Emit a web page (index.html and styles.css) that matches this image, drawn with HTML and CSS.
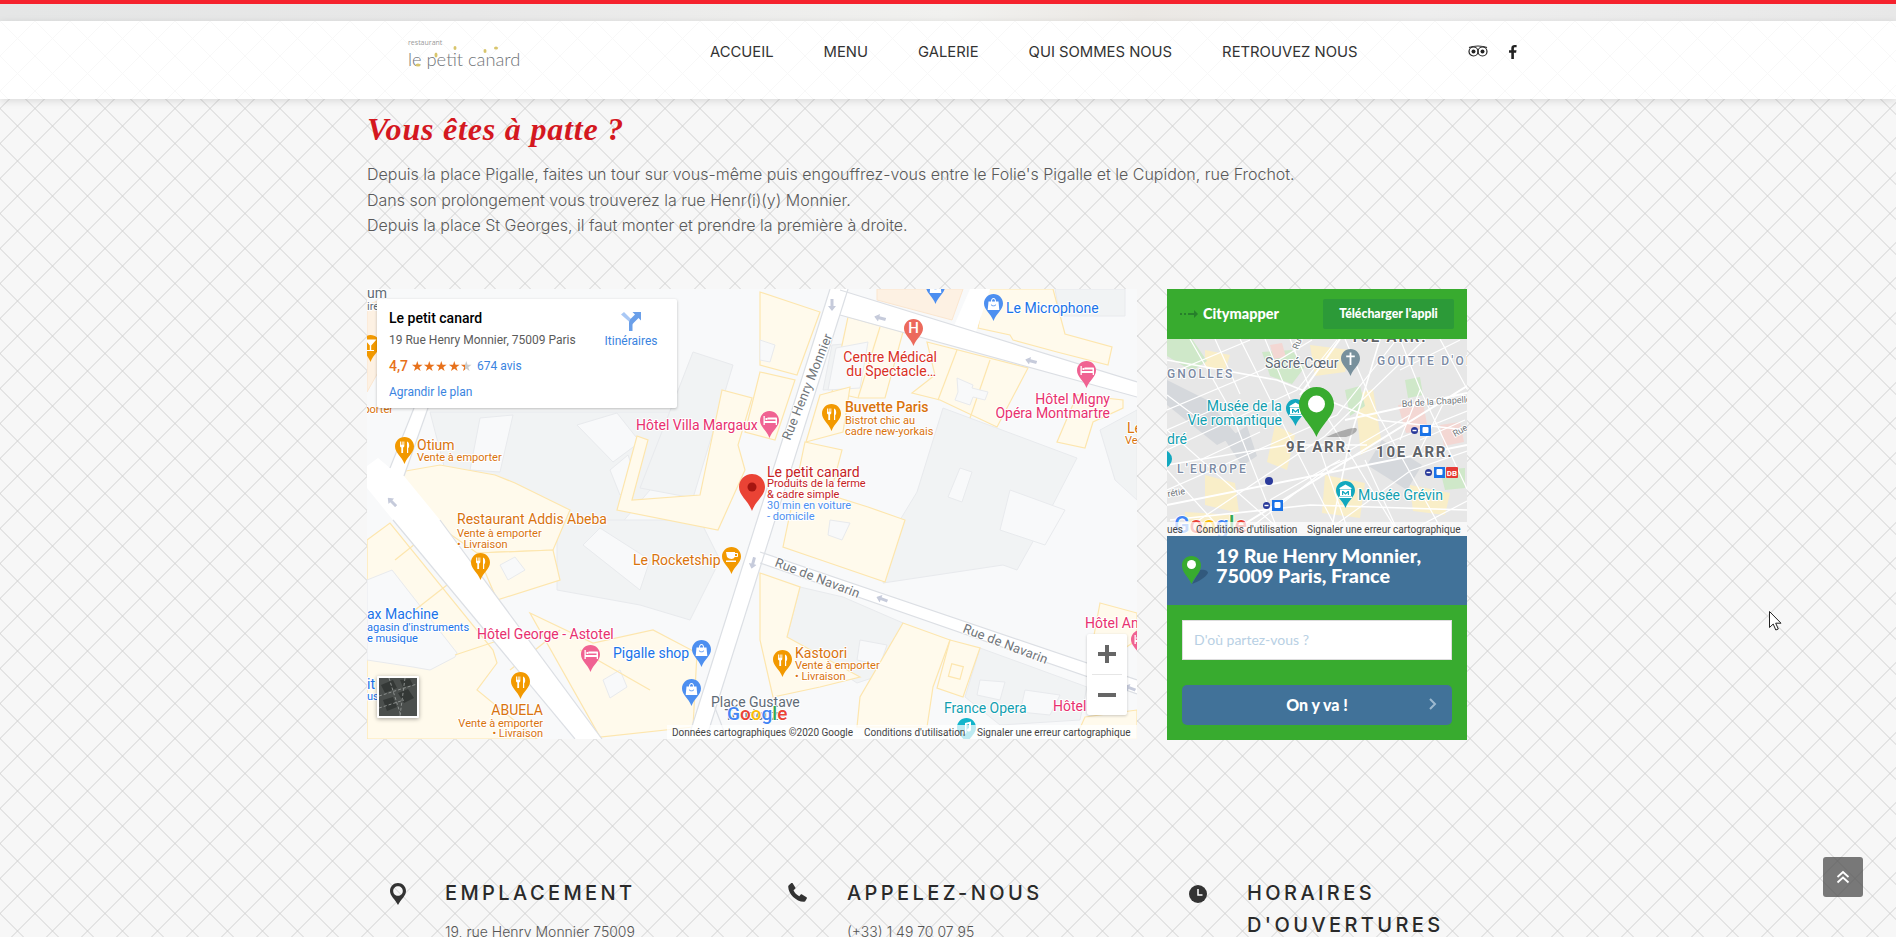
FILE: index.html
```html
<!DOCTYPE html>
<html lang="fr">
<head>
    <meta charset="UTF-8">
    <title>Le petit canard - Nous trouver</title>
    <link rel="stylesheet" href="styles.css">
</head>
<body>
<svg class="defs" width="0" height="0">
    <symbol id="pin" viewBox="0 0 19 27" overflow="visible">
        <path d="M9.5 0C4.2 0 0 4.2 0 9.5 0 16 6.6 19 9.5 27 12.4 19 19 16 19 9.5 19 4.2 14.8 0 9.5 0z"/>
    </symbol>
    <symbol id="i-food" viewBox="0 0 19 27">
        <path class="wh" d="M5 4.5h.9v3.2h.8V4.500h.9v3.200h.8V4.500h.9v4.500c0 .8-.6 1.300-1.200 1.500V16H6.300v-5.500C5.600 10.300 5 9.800 5 9zM12 4.500c1.300.3 2.200 2 2.200 4 0 1.300-.4 2.300-1 2.800V16H12z"/>
    </symbol>
    <symbol id="i-bed" viewBox="0 0 19 27">
        <path class="wh" d="M3.500 5h1.300v5h10.700V8.500h-8V6.500h8.500c.7 0 1 .5 1 1V14h-1.300v-2H4.800v2H3.500zM5.500 7h1.800v2H5.500z"/>
    </symbol>
    <symbol id="i-bag" viewBox="0 0 19 27">
        <path class="wh" d="M4.500 7.500h10l.8 8.500H3.700zM7 7.500C7 5.500 8 4 9.500 4S12 5.500 12 7.500h-1C11 6 10.500 5 9.500 5S8 6 8 7.500z"/>
        <path class="ic-bl" d="M6.800 10.500c.5 2.400 4.900 2.400 5.400 0l-.8-.1c-.4 1.500-3.400 1.500-3.800 0z"/>
    </symbol>
    <symbol id="i-cup" viewBox="0 0 19 27">
        <path class="wh" d="M4 5h9v1h2c.6 0 1 .4 1 1v2c0 .6-.4 1-1 1h-2.300c-.5 1.300-1.700 2-3.200 2S6 11.300 5 10zM13 7v2h2V7zM4 13.500h10V15H4z"/>
    </symbol>
    <symbol id="i-martini" viewBox="0 0 19 27">
        <path class="wh" d="M3.500 4.500h12l-5.300 6v4.500h2.800v1H6v-1h2.800v-4.500z"/>
    </symbol>
    <symbol id="i-museum" viewBox="0 0 19 27">
        <path class="wh" d="M9.500 3.500l6 3.500v1h-12V7zM4 8.500h11V15H4zM3 15.500h13V17H3z"/>
        <path class="ic-tl" d="M6 10h1.300l2.200 2 2.200-2H13v4h-1.200v-2.300l-2.300 2-2.300-2V14H6z"/>
    </symbol>
    <symbol id="i-cross" viewBox="0 0 19 27">
        <path class="wh" d="M8.600 3.500h1.800v3h3.400v1.800h-3.400V16H8.600V8.300H5.200V6.500h3.400z"/>
    </symbol>
    <symbol id="i-note" viewBox="0 0 19 27">
        <path class="wh" d="M8 5l6-1.500v8c0 1.200-1 2-2 2s-2-.6-2-1.600 1-1.700 2-1.700V6l-2.500.7V14c0 1.200-1 2-2 2s-2-.6-2-1.600 1-1.700 2.500-1.700z"/>
    </symbol>
    <symbol id="road-arrow" viewBox="0 0 12 8">
        <path d="M0 4l5-4v2.500h7v3H5V8z"/>
    </symbol>
    <symbol id="metro" viewBox="0 0 20 11">
        <circle class="ic-navy" cx="3.500" cy="5.500" r="3.500"/>
        <rect class="ic-wh" x="1.500" y="4.800" width="4" height="1.400"/>
        <rect class="ic-sq" x="9" y="0" width="11" height="11"/>
        <rect class="ic-wh" x="11.500" y="2" width="6" height="6" rx="1"/>
    </symbol>
</svg>

<header class="site-header">
    <div class="top-bar"></div>
    <div class="top-strip"></div>
    <div class="nav-row">
        <div class="wrap nav-inner">
            <a class="logo">
                <span class="logo-small">restaurant</span>
                <span class="logo-name">le petit canard</span>
                <svg class="logo-dabs" width="100" height="30" viewBox="0 0 100 30">
                    <ellipse class="dab" cx="10" cy="25" rx="2.500" ry="1.500"/>
                    <ellipse class="dab" cx="47" cy="8" rx="1.500" ry="2"/>
                    <ellipse class="dab" cx="28" cy="15" rx="1.500" ry="2.500"/>
                    <ellipse class="dab" cx="77" cy="11" rx="1.500" ry="2"/>
                    <ellipse class="dab" cx="88" cy="8" rx="2" ry="1.500"/>
                </svg>
            </a>
            <nav class="main-nav">
                <a>ACCUEIL</a>
                <a>MENU</a>
                <a>GALERIE</a>
                <a>QUI SOMMES NOUS</a>
                <a>RETROUVEZ NOUS</a>
            </nav>
            <div class="social">
                <svg width="20" height="12" viewBox="0 0 20 12">
                    <circle class="ta-line" cx="5.500" cy="6.500" r="4.500"/>
                    <circle class="ta-line" cx="14.500" cy="6.500" r="4.500"/>
                    <circle class="ta-dot" cx="5.500" cy="6.500" r="2"/>
                    <circle class="ta-dot" cx="14.500" cy="6.500" r="2"/>
                    <path class="ta-line" d="M1 2.500C6 .5 14 .5 19 2.500"/>
                </svg>
                <svg width="8" height="14" viewBox="0 0 8 14">
                    <path class="fb" d="M2.300 14V7.700H0V5.200h2.300V3.300C2.300 1 3.700 0 5.600 0c.9 0 1.700.1 2 .1v2.200H6.200c-1 0-1.300.5-1.300 1.200v1.700h2.600l-.4 2.500H4.900V14z"/>
                </svg>
            </div>
        </div>
    </div>
</header>

<main class="wrap">
    <h1 class="page-title">Vous êtes à patte ?</h1>
    <p class="intro">
        Depuis la place Pigalle, faites un tour sur vous-même puis engouffrez-vous entre le Folie's Pigalle et le Cupidon, rue Frochot.<br>
        Dans son prolongement vous trouverez la rue Henr(i)(y) Monnier.<br>
        Depuis la place St Georges, il faut monter et prendre la première à droite.
    </p>

    <section class="maps">
        <div class="gmap">
            <svg class="gmap-svg" width="770" height="450" viewBox="367 289 770 450">
                <rect class="m-bg" x="367" y="289" width="770" height="450"/>

                <!-- batiments gris -->
                <polygon class="m-g" points="430,412 677,412 650,490 620,525 557,520 520,490 445,470"/>
                <polygon class="m-g" points="557,520 700,520 720,560 690,620 640,605 557,590"/>
                <polygon class="m-g" points="640,488 693,352 733,365 693,498"/>
                <polygon class="m-g" points="917,492 943,408 1077,458 1045,520 1017,570 1003,565 883,583 900,520"/>
                <polygon class="m-g" points="787,637 800,587 843,597 903,623 887,673 857,683"/>
                <polygon class="m-g" points="965,697 980,648 1087,687 1080,720 1000,725"/>
                <polygon class="m-g" points="832,345 870,342 860,388 823,390"/>
                <polygon class="m-g" points="1055,289 1125,289 1125,316 1060,316"/>
                <polygon class="m-g" points="1100,430 1137,410 1137,500 1115,480"/>
                <polygon class="m-g" points="367,660 410,668 420,739 367,739"/>
                <polygon class="m-b" points="480,418 513,415 500,472 470,470"/>
                <polygon class="m-b" points="577,425 617,413 640,442 613,462"/>
                <polygon class="m-b" points="610,470 628,455 637,480 620,495"/>
                <polygon class="m-b" points="960,468 972,472 962,502 948,497"/>
                <polygon class="m-b" points="1010,490 1065,510 1045,545 1000,530"/>
                <polygon class="m-b" points="583,545 600,528 650,560 640,590"/>
                <polygon class="m-b" points="860,640 887,645 880,665 857,660"/>
                <polygon class="m-b" points="980,680 1005,682 1000,700 977,695"/>
                <polygon class="m-b" points="1025,690 1060,695 1050,715 1020,712"/>

                <!-- batiments jaunes -->
                <polygon class="m-o" points="877,289 963,289 952,320 877,300"/>
                <polygon class="m-o" points="367,305 380,300 385,360 367,392"/>
                <polygon class="m-y" points="927,342 1028,368 997,427 940,400 912,393 935,375"/>
                <polyline class="m-l" points="957,350 938,400"/>
                <polyline class="m-l" points="990,360 970,418"/>
                <polygon class="m-b" points="957,378 973,385 972,388 988,392 985,400 973,397 970,405 955,400 958,392"/>
                <polygon class="m-y" points="848,317 903,332 885,398 858,398 832,392"/>
                <polyline class="m-l" points="880,327 858,398"/>
                <polygon class="m-b" points="836,348 868,342 860,388 828,390"/>
                <polygon class="m-y" points="760,292 820,312 797,375 760,365"/>
                <polygon class="m-b" points="760,340 775,345 770,362 760,360"/>
                <polygon class="m-y" points="760,372 795,380 775,440 745,432"/>
                <polygon class="m-y" points="820,395 850,387 843,432 806,442"/>
                <polygon class="m-y" points="805,442 842,450 830,495 868,507 905,520 885,582 812,557 783,547"/>
                <polygon class="m-b" points="830,520 850,523 842,540 828,535"/>
                <polygon class="m-y" points="903,623 950,640 933,687 927,727 857,727 860,697"/>
                <polygon class="m-y" points="950,640 980,648 963,697 937,688"/>
                <rect class="m-l" x="950" y="665" width="12" height="13" transform="rotate(15 956 671)"/>
                <polygon class="m-y" points="760,573 800,587 787,637 860,677 820,687 773,697 760,640"/>
                <polygon class="m-y" points="1100,603 1137,613 1137,640 1087,673"/>
                <polygon class="m-y" points="1085,717 1137,710 1137,739 1075,739"/>
                <polygon class="m-y" points="978,328 985,289 1053,289 1065,334 1112,347 1108,365 1057,352 1013,340 1010,335"/>
                <polygon class="m-y" points="1057,442 1077,395 1123,400 1123,408 1093,422 1085,448"/>
                <polygon class="m-y" points="632,500 648,440 637,436 617,510 718,530 745,470 738,445 752,398 722,390 700,495"/>
                <polygon class="m-y" points="400,472 440,465 495,475 515,483 570,510 553,550 477,553 430,520"/>
                <polygon class="m-y" points="477,553 553,550 560,580 497,600"/>
                <polygon class="m-y" points="367,540 390,523 493,650 497,663 477,690 537,739 367,739"/>
                <polygon class="m-b" points="367,580 392,570 417,602 457,653 455,657 430,670 413,667 367,660"/>
                <polygon class="m-y" points="530,613 593,643 653,630 697,653 693,727 600,737"/>
                <polygon class="m-b" points="603,680 620,670 627,687 610,698"/>
                <polygon class="m-b" points="500,565 515,557 525,570 508,580"/>
                <polyline class="m-l" points="420,540 395,560"/>
                <polyline class="m-l" points="447,585 415,610"/>
                <polyline class="m-l" points="500,640 455,655"/>
                <polyline class="m-l" points="560,630 510,670"/>
                <polyline class="m-l" points="650,690 580,650"/>

                <!-- rues -->
                <polygon class="m-r" points="367,466 367,488 393,520 575,739 602,739 440,520 404,476 428,408 414,408 390,468 378,458"/>
                <polygon class="m-r" points="840,290 1137,382 1137,397 840,315"/>
                <polygon class="m-r" points="953,328 970,289 990,289 975,335"/>
                <polygon class="m-r" points="760,552 1137,680 1137,694 760,563"/>
                <polygon class="m-r" points="830,289 848,289 706,739 688,739"/>
                <polyline class="m-e" points="840,315 1137,397"/>
                <polyline class="m-e" points="840,290 1137,382"/>
                <polyline class="m-e" points="760,552 1137,680"/>
                <polyline class="m-e" points="760,563 1137,694"/>
                <polyline class="m-e" points="830,289 688,739"/>
                <polyline class="m-e" points="848,289 706,739"/>
                <polyline class="m-e" points="393,520 575,739"/>
                <polyline class="m-e" points="440,520 602,739"/>
                <polyline class="m-e" points="404,476 428,408"/>
                <polyline class="m-e" points="390,468 414,408"/>
                <polyline class="m-e" points="712,700 727,739"/>

                <use class="m-arrow" href="#road-arrow" x="826" y="301" width="12" height="8" transform="rotate(-90 832 305)"/>
                <use class="m-arrow" href="#road-arrow" x="874" y="314" width="12" height="8" transform="rotate(15 880 318)"/>
                <use class="m-arrow" href="#road-arrow" x="1025" y="357" width="12" height="8" transform="rotate(15 1031 361)"/>
                <use class="m-arrow" href="#road-arrow" x="386" y="498" width="12" height="8" transform="rotate(45 392 502)"/>
                <use class="m-arrow" href="#road-arrow" x="747" y="559" width="12" height="8" transform="rotate(-75 753 563)"/>
                <use class="m-arrow" href="#road-arrow" x="876" y="595" width="12" height="8" transform="rotate(20 882 599)"/>
                <use class="m-arrow" href="#road-arrow" x="1124" y="684" width="12" height="8" transform="rotate(20 1130 688)"/>

                <!-- noms de rues -->
                <text class="t-road" x="790" y="441" transform="rotate(-68 790 441)">Rue Henry Monnier</text>
                <text class="t-road" x="774" y="566" transform="rotate(21 774 566)">Rue de Navarin</text>
                <text class="t-road" x="962" y="632" transform="rotate(21 962 632)">Rue de Navarin</text>

                <!-- lieux -->
                <g class="c-or">
                    <g transform="translate(367 335)"><use href="#pin" width="19" height="27" x="-6"/><use href="#i-martini" width="19" height="27" x="-6"/></g>
                    <g transform="translate(395 437)"><use href="#pin" width="19" height="27"/><use href="#i-food" width="19" height="27"/></g>
                    <g transform="translate(471 553)"><use href="#pin" width="19" height="27"/><use href="#i-food" width="19" height="27"/></g>
                    <g transform="translate(822 404)"><use href="#pin" width="19" height="27"/><use href="#i-food" width="19" height="27"/></g>
                    <g transform="translate(722 547)"><use href="#pin" width="19" height="27"/><use href="#i-cup" width="19" height="27"/></g>
                    <g transform="translate(511 672)"><use href="#pin" width="19" height="27"/><use href="#i-food" width="19" height="27"/></g>
                    <g transform="translate(773 650)"><use href="#pin" width="19" height="27"/><use href="#i-food" width="19" height="27"/></g>
                </g>
                <g class="c-pk">
                    <g transform="translate(760 411)"><use href="#pin" width="19" height="27"/><use href="#i-bed" width="19" height="27"/></g>
                    <g transform="translate(1077 361)"><use href="#pin" width="19" height="27"/><use href="#i-bed" width="19" height="27"/></g>
                    <g transform="translate(581 645)"><use href="#pin" width="19" height="27"/><use href="#i-bed" width="19" height="27"/></g>
                    <g transform="translate(1131 630)"><use href="#pin" width="19" height="27"/><use href="#i-bed" width="19" height="27"/></g>
                </g>
                <g class="c-bl">
                    <g transform="translate(984 294)"><use href="#pin" width="19" height="27"/><use href="#i-bag" width="19" height="27"/></g>
                    <g transform="translate(926 277)"><use href="#pin" width="19" height="27"/><use href="#i-bag" width="19" height="27"/></g>
                    <g transform="translate(692 640)"><use href="#pin" width="19" height="27"/><use href="#i-bag" width="19" height="27"/></g>
                    <g transform="translate(682 679)"><use href="#pin" width="19" height="27"/><use href="#i-bag" width="19" height="27"/></g>
                </g>
                <g class="c-rd" transform="translate(904 319)">
                    <use href="#pin" width="19" height="27"/>
                    <text class="t-h" x="9.500" y="14">H</text>
                </g>
                <g class="c-tl" transform="translate(957 718)"><use href="#pin" width="19" height="27"/><use href="#i-note" width="19" height="27"/></g>
                <g class="c-main" transform="translate(739 474)">
                    <use href="#pin" width="26" height="37"/>
                    <circle class="dot-dark" cx="13" cy="13" r="4.500"/>
                </g>

                <text class="t-gy t-nm" x="367" y="298">um</text>
                <text class="t-gy t-sb" x="367" y="310">ire</text>
                <text class="t-or t-sb" x="393" y="413" text-anchor="end">emporter</text>
                <text class="t-or t-nm" x="417" y="450">Otium</text>
                <text class="t-or t-sb" x="417" y="461">Vente à emporter</text>
                <text class="t-pk t-nm" x="636" y="430">Hôtel Villa Margaux</text>
                <text class="t-or t-nm" x="457" y="524">Restaurant Addis Abeba</text>
                <text class="t-or t-sb" x="457" y="537">Vente à emporter</text>
                <text class="t-or t-sb" x="457" y="548">• Livraison</text>
                <text class="t-rd t-nm" x="937" y="362" text-anchor="end">Centre Médical</text>
                <text class="t-rd t-nm" x="936" y="376" text-anchor="end">du Spectacle…</text>
                <text class="t-or t-nm t-md" x="845" y="412">Buvette Paris</text>
                <text class="t-or t-sb" x="845" y="424">Bistrot chic au</text>
                <text class="t-or t-sb" x="845" y="435">cadre new-yorkais</text>
                <text class="t-bl t-nm" x="1006" y="313">Le Microphone</text>
                <text class="t-pk t-nm" x="1110" y="404" text-anchor="end">Hôtel Migny</text>
                <text class="t-pk t-nm" x="1110" y="418" text-anchor="end">Opéra Montmartre</text>
                <text class="t-or t-nm" x="1127" y="433">Le</text>
                <text class="t-or t-sb" x="1125" y="444">Ve</text>
                <text class="t-dr t-nm" x="767" y="477">Le petit canard</text>
                <text class="t-dr t-sb" x="767" y="487">Produits de la ferme</text>
                <text class="t-dr t-sb" x="767" y="498">&amp; cadre simple</text>
                <text class="t-lb t-sb" x="767" y="509">30 min en voiture</text>
                <text class="t-lb t-sb" x="767" y="520">- domicile</text>
                <text class="t-or t-nm" x="633" y="565">Le Rocketship</text>
                <text class="t-bl t-nm" x="367" y="619">ax Machine</text>
                <text class="t-bl t-sb" x="367" y="631">agasin d'instruments</text>
                <text class="t-bl t-sb" x="367" y="642">e musique</text>
                <text class="t-pk t-nm" x="477" y="639">Hôtel George - Astotel</text>
                <text class="t-bl t-nm" x="613" y="658">Pigalle shop</text>
                <text class="t-bl t-nm" x="367" y="689">it</text>
                <text class="t-bl t-sb" x="367" y="700">us</text>
                <text class="t-or t-nm" x="543" y="715" text-anchor="end">ABUELA</text>
                <text class="t-or t-sb" x="543" y="727" text-anchor="end">Vente à emporter</text>
                <text class="t-or t-sb" x="543" y="737" text-anchor="end">• Livraison</text>
                <text class="t-gy t-nm" x="711" y="707">Place Gustave</text>
                <text class="t-gy t-nm" x="755" y="720" text-anchor="middle">Toudouze</text>
                <text class="t-or t-nm" x="795" y="658">Kastoori</text>
                <text class="t-or t-sb" x="795" y="669">Vente à emporter</text>
                <text class="t-or t-sb" x="795" y="680">• Livraison</text>
                <text class="t-tl t-nm" x="944" y="713">France Opera</text>
                <text class="t-pk t-nm" x="1053" y="711">Hôtel</text>
                <text class="t-pk t-nm" x="1085" y="628">Hôtel An</text>

                <text class="t-goog" x="727" y="720"><tspan class="g-b">G</tspan><tspan class="g-r">o</tspan><tspan class="g-y">o</tspan><tspan class="g-b">g</tspan><tspan class="g-g">l</tspan><tspan class="g-r">e</tspan></text>

                <!-- miniature satellite -->
                <rect class="thumb-border" x="377" y="676" width="42" height="42" rx="1"/>
                <rect class="thumb" x="379" y="678" width="38" height="38"/>
                <path class="thumb-a" d="M381 685l12-5 4 8-12 5zM398 693l10-4 6 9-10 5zM383 700l10-3 4 10-10 4zM400 680l10-1 3 6-10 2z"/>
                <path class="thumb-b" d="M379 696l38-12M389 678l12 38M405 678l-5 38M379 708l25-8"/>

                <rect class="attr-bg" x="667" y="725" width="470" height="14"/>
                <text class="t-attr" x="672" y="736">Données cartographiques ©2020 Google</text>
                <text class="t-attr" x="864" y="736">Conditions d'utilisation</text>
                <text class="t-attr" x="977" y="736">Signaler une erreur cartographique</text>
            </svg>

            <div class="place-card">
                <div class="place-info">
                    <div class="place-name">Le petit canard</div>
                    <div class="place-addr">19 Rue Henry Monnier, 75009 Paris</div>
                    <div class="place-rating"><span class="rate">4,7</span><span class="stars">★★★★★</span><a class="reviews">674 avis</a></div>
                    <a class="bigger">Agrandir le plan</a>
                </div>
                <div class="place-dir">
                    <svg width="20" height="20" viewBox="0 0 20 20">
                        <path class="dir-light" d="M0 3.500L3 1l7.500 7.500L8.500 11z"/>
                        <path class="dir-dark" d="M8 20v-8c0-2 1-3.500 2-4.500l4-4L11.500 1H20v8.500L17.500 7 13 11.500c-1 1-1.500 1.500-1.500 2.500v6z"/>
                    </svg>
                    <a>Itinéraires</a>
                </div>
            </div>

            <div class="zoom-ctrl">
                <button class="zoom-btn"><svg width="18" height="18" viewBox="0 0 18 18"><path class="zoom-ic" d="M7 0h4v7h7v4h-7v7H7v-7H0V7h7z"/></svg></button>
                <div class="zoom-sep"></div>
                <button class="zoom-btn"><svg width="18" height="18" viewBox="0 0 18 18"><path class="zoom-ic" d="M0 7h18v4H0z"/></svg></button>
            </div>
        </div>

        <aside class="citymapper">
            <div class="cm-top">
                <svg class="cm-arrow" width="18" height="8" viewBox="0 0 18 8"><path d="M0 3h2v2H0zM4 3h2v2H4zM8 3h6V0l4 4-4 4V5H8z"/></svg>
                <span class="cm-brand">Citymapper</span>
                <a class="cm-app">Télécharger l'appli</a>
            </div>
            <svg class="cm-map" width="300" height="197" viewBox="1167 339 300 197">
                <rect class="cm-bg" x="1167" y="339" width="300" height="197"/>
                <path class="cm-y" d="M1205 350l25 5-5 15-20-3zM1275 425l20 10-8 35-20-8zM1310 345l40 5-5 22-30 4zM1355 395l18-6 8 50-20 16zM1410 485l40 8-5 22-32-4zM1205 475l30 8 4 30-34-8zM1325 475l40 8-5 35-38-5zM1185 512l50 3v20h-50z"/>
                <path class="cm-gr" d="M1262 352l30-2 12 18-12 16-22-8zM1345 390l15-4 5 20-15 10zM1167 339h25l15 22-15 10-25-15zM1405 380l15-3 3 18-15 3zM1440 470l25-2v20l-20 2z"/>
                <path class="cm-pk" d="M1398 405l25-3 5 28-22 3zM1440 425l20-3 4 20-20 4zM1270 345l12-2 4 14-12 2z"/>
                <path class="cm-gy" d="M1167 380l40 20 30 35-20 10-50-40zM1382 440l40 25-15 25-40-25zM1225 440l22-14 10 30-15 10z"/>
                <path class="cm-rd" d="M1167 375L1250 340M1167 410l95-40 50-30M1167 450l130-60 40-50M1167 490l170-75 60-76M1175 536l150-100 100-97M1240 536l90-70 137-55M1320 536l90-65 57-20M1400 536l67-35M1167 430l50-22M1200 460l60-28M1270 500l70-40M1350 450l60-35M1400 370l60-30M1420 440l45-20"/>
                <path class="cm-rd" d="M1190 339l40 70 50 127M1240 339l30 60 70 137M1290 339l20 50 90 147M1345 339l30 70 70 127M1400 339l20 50 47 100M1167 430l120 106M1167 470l60 66M1167 395l40 30M1440 339l27 50M1215 339l25 55M1265 339l25 60M1320 450l30 86M1365 460l35 76M1420 390l-20 50M1445 400l-25 50"/>
                <path class="cm-rd2" d="M1167 505l300-60M1225 536l242-150M1300 395l40-56M1345 420l122-27"/>
                <path class="cm-rd3" d="M1167 465l120-20 80 0M1167 360l110 20 100 40 90 10M1380 339l-30 100-20 97M1170 520l140-15 157 5"/>

                <g class="c-slate" transform="translate(1341 349)"><use href="#pin" width="19" height="27"/><use href="#i-cross" width="19" height="27"/></g>
                <g class="c-tl2" transform="translate(1286 399)"><use href="#pin" width="19" height="27"/><use href="#i-museum" width="19" height="27"/></g>
                <g class="c-tl2" transform="translate(1336 481)"><use href="#pin" width="19" height="27"/><use href="#i-museum" width="19" height="27"/></g>
                <circle class="c-tl2-dot" cx="1163" cy="459" r="9"/>

                <path class="cm-pin-shadow" d="M1326 437c6-3 24-10 30-9 3 2-2 7-10 9z"/>
                <path class="cm-pin" d="M1316.500 387c-9.700 0-17.500 7.800-17.500 17.500 0 12 12 19 17.500 32.500 5.500-13.500 17.500-20.500 17.500-32.500 0-9.700-7.800-17.500-17.500-17.500z"/>
                <circle class="wh" cx="1316.500" cy="404" r="8.500"/>

                <use href="#metro" x="1411" y="425" width="20" height="11"/>
                <use href="#metro" x="1425" y="467" width="20" height="11"/>
                <rect class="ic-db" x="1446" y="467" width="12" height="11" rx="1"/>
                <text class="t-db" x="1452" y="476">DB</text>
                <circle class="ic-navy" cx="1269" cy="481" r="4"/>
                <use href="#metro" x="1263" y="500" width="20" height="11"/>

                <text class="cm-arr" x="1350" y="342">10E ARR.</text>
                <text class="t-gy t-nm" x="1265" y="368">Sacré-Cœur</text>
                <text class="cm-qt" x="1377" y="365">GOUTTE D'OR</text>
                <text class="cm-qt" x="1167" y="378">GNOLLES</text>
                <text class="t-tl t-nm" x="1282" y="411" text-anchor="end">Musée de la</text>
                <text class="t-tl t-nm" x="1282" y="425" text-anchor="end">Vie romantique</text>
                <text class="t-tl t-nm" x="1167" y="444">dré</text>
                <text class="cm-arr" x="1286" y="452">9E ARR.</text>
                <text class="cm-arr" x="1376" y="457">10E ARR.</text>
                <text class="cm-qt" x="1177" y="473">L'EUROPE</text>
                <text class="t-tl t-nm" x="1358" y="500">Musée Grévin</text>
                <text class="t-mini" x="1402" y="407" transform="rotate(-4 1402 407)">Bd de la Chapelle</text>
                <text class="t-mini" x="1455" y="437" transform="rotate(-30 1455 437)">Rue</text>
                <text class="t-mini" x="1298" y="350" transform="rotate(-70 1298 350)">Rue</text>
                <text class="t-mini" x="1168" y="497" transform="rotate(-10 1168 497)">rétie</text>

                <text class="t-goog t-goog-lg" x="1174" y="533"><tspan class="g-b">G</tspan><tspan class="g-r">o</tspan><tspan class="g-y">o</tspan><tspan class="g-b">g</tspan><tspan class="g-g">l</tspan><tspan class="g-r">e</tspan></text>
                <rect class="attr-bg" x="1167" y="522" width="300" height="14"/>
                <text class="t-attr" x="1167" y="533">ues</text>
                <text class="t-attr" x="1196" y="533">Conditions d'utilisation</text>
                <text class="t-attr" x="1307" y="533">Signaler une erreur cartographique</text>
            </svg>
            <div class="cm-address">
                <svg width="26" height="28" viewBox="0 0 26 28">
                    <path class="cm-pin-shadow2" d="M10 28c6-2 14-7 16-11 0-3-5-4-8-3z"/>
                    <path class="cm-pin" d="M9.500 0C4.200 0 0 4 0 9c0 8 6 11 9.500 19C13 20 19 17 19 9c0-5-4.200-9-9.500-9z"/>
                    <circle class="wh" cx="9.500" cy="8.500" r="4.500"/>
                </svg>
                <span class="cm-addr-text">19 Rue Henry Monnier,<br>75009 Paris, France</span>
            </div>
            <form class="cm-form">
                <input class="cm-input" type="text" placeholder="D'où partez-vous ?">
                <button class="cm-go" type="button">
                    On y va !
                    <svg class="cm-chevron" width="8" height="12" viewBox="0 0 8 12"><path d="M1 1l5 5-5 5"/></svg>
                </button>
            </form>
        </aside>
    </section>

    <section class="infos">
        <div class="info">
            <svg class="info-ic" width="16" height="22" viewBox="0 0 16 22"><path class="dark-ic" d="M8 0C3.600 0 0 3.500 0 8c0 5 5 8 8 14 3-6 8-9 8-14 0-4.500-3.600-8-8-8zm0 3.200c2.700 0 4.800 2.100 4.800 4.800S10.700 12.800 8 12.800 3.200 10.700 3.200 8 5.300 3.200 8 3.200z"/></svg>
            <div>
                <h3>EMPLACEMENT</h3>
                <p>19, rue Henry Monnier 75009</p>
            </div>
        </div>
        <div class="info info-tel">
            <svg class="info-ic" width="20" height="19" viewBox="0 0 20 19"><path class="dark-ic" d="M4.500 0l2.800 4.500c.3.500.2 1-.2 1.300L5.500 7.200c1 2.500 3.200 4.700 5.800 6l1.400-1.600c.4-.4 1-.5 1.400-.2l4.400 2.800c.4.300.5.800.3 1.200l-1.300 2.400c-.3.600-1 1-1.700 1C8 18.500.5 11 .2 3.700c0-.7.300-1.300.9-1.600L3.300.1c.4-.3.900-.3 1.200-.1z"/></svg>
            <div>
                <h3>APPELEZ-NOUS</h3>
                <p>(+33) 1 49 70 07 95</p>
            </div>
        </div>
        <div class="info info-time">
            <svg class="info-ic" width="18" height="18" viewBox="0 0 18 18"><circle class="dark-ic" cx="9" cy="9" r="9"/><path class="clock-hand" d="M9 4v6h4.500"/></svg>
            <div>
                <h3>HORAIRES<br>D'OUVERTURES</h3>
            </div>
        </div>
    </section>
</main>

<a class="to-top">
    <svg width="14" height="14" viewBox="0 0 14 14"><path d="M1.500 7l5.500-5 5.500 5M1.500 12.500L7 7.500l5.500 5"/></svg>
</a>

<svg class="cursor" width="13" height="20" viewBox="0 0 13 20">
    <path d="M.5.500v16l3.700-3.500 2.600 6 2.500-1-2.600-5.800H12z"/>
</svg>
</body>
</html>
```

FILE: styles.css
```css
html, body {
    margin: 0;
    height: 937px;
    overflow: hidden;
}

body {
    font-family: Inter, "Open Sans", sans-serif;
    background-color: #f7f7f7;
    background-image:
        linear-gradient(45deg, transparent calc(50% - .5px), #d0d0d0 calc(50% - .5px), #d0d0d0 calc(50% + .5px), transparent calc(50% + .5px)),
        linear-gradient(-45deg, transparent calc(50% - .5px), #d0d0d0 calc(50% - .5px), #d0d0d0 calc(50% + .5px), transparent calc(50% + .5px));
    background-size: 35px 35px;
    background-position: 17.5px 21px;
    color: #666;
}

.defs {
    position: absolute;
}

.wrap {
    width: 1166px;
    margin: 0 auto;
    padding-left: 4px;
}

/* header */
.top-bar {
    height: 4px;
    background: #f5222d;
}

.top-strip {
    height: 17px;
    background: linear-gradient(90deg, #e5e6e6 0, #e8e8e8 25%, #f1f1ef 50%, #ebe8e4 60%, #eeeeee 75%, #e8e8e8 100%);
}

.nav-row {
    height: 78px;
    background-color: #fff;
    background-image:
        linear-gradient(45deg, transparent calc(50% - .6px), #f8f8f8 calc(50% - .6px), #f8f8f8 calc(50% + .6px), transparent calc(50% + .6px)),
        linear-gradient(-45deg, transparent calc(50% - .6px), #f8f8f8 calc(50% - .6px), #f8f8f8 calc(50% + .6px), transparent calc(50% + .6px));
    background-size: 35px 35px;
    box-shadow: 0 2px 8px rgba(0, 0, 0, .12);
    position: relative;
}

.nav-inner {
    display: flex;
    height: 78px;
}

.logo {
    position: relative;
    width: 261px;
    margin-left: 41px;
    padding-top: 17px;
    color: #777;
}

.logo-small {
    display: block;
    font-family: "Open Sans", sans-serif;
    font-size: 7px;
    line-height: 9px;
    color: #999;
}

.logo-name {
    display: block;
    font-family: Lato, sans-serif;
    font-weight: 300;
    font-size: 18.300px;
    line-height: 24px;
    color: #707478;
}

.logo-dabs {
    position: absolute;
    left: 0;
    top: 19px;
}

.dab {
    fill: #d8c56c;
}

.main-nav {
    display: flex;
    gap: 50px;
    padding-top: 21px;
    margin-left: 41px;
}

.main-nav a {
    font-size: 14.800px;
    line-height: 20px;
    color: #333;
    font-weight: 400;
}

.social {
    display: flex;
    align-items: flex-start;
    gap: 21px;
    margin-left: 111px;
    padding-top: 23px;
}

.social svg {
    margin-top: 1px;
}

.ta-line {
    fill: none;
    stroke: #222;
    stroke-width: 1.200;
}

.ta-dot {
    fill: #222;
}

.fb {
    fill: #222;
}

/* titre */
.page-title {
    margin: 10px 0 0;
    font-family: "Liberation Serif", serif;
    font-style: italic;
    font-weight: bold;
    font-size: 32px;
    line-height: 40px;
    letter-spacing: .8px;
    color: #d4181f;
}

.intro {
    margin: 13px 0 0;
    font-size: 16px;
    line-height: 25.500px;
    font-weight: 300;
    color: #5a5a5a;
}

/* cartes */
.maps {
    display: flex;
    gap: 30px;
    margin-top: 50px;
}

.gmap {
    position: relative;
    width: 770px;
    height: 450px;
    overflow: hidden;
}

.gmap-svg, .cm-map {
    display: block;
}

.m-bg { fill: #f8f9fa; }
.m-g { fill: #f1f3f4; stroke: #e8eaed; stroke-width: 1; }
.m-b { fill: #f8f9fa; stroke: #e8eaed; stroke-width: 1; }
.m-y { fill: #fffaec; stroke: #fde6ae; stroke-width: 1.200; }
.m-o { fill: #fdf1e3; stroke: #fbe6cf; stroke-width: 1; }
.m-l { fill: none; stroke: #fde6ae; stroke-width: 1.200; }
.m-r { fill: #fff; }
.m-e { fill: none; stroke: #dcdfe4; stroke-width: 1.200; }
.m-arrow { fill: #c6cbdb; }

.c-or { fill: #f29900; }
.c-pk { fill: #f06292; }
.c-bl { fill: #4d8ff0; }
.c-rd { fill: #ec6a5c; }
.c-tl { fill: #12b5cb; }
.c-tl2 { fill: #12a8bf; }
.c-tl2-dot { fill: #12a8bf; }
.c-slate { fill: #78909c; }
.c-main { fill: #ea4335; }
.dot-dark { fill: #a51510; }
.wh { fill: #fff; }
.ic-bl { fill: #4d8ff0; }
.ic-tl { fill: #12a8bf; }
.ic-navy { fill: #2a3a9b; }
.ic-wh { fill: #fff; }
.ic-sq { fill: #1a73e8; }
.ic-db { fill: #e53935; }

.t-nm, .t-sb, .t-road, .t-attr, .t-goog, .t-mini, .t-h, .t-db, .cm-arr, .cm-qt {
    font-family: Roboto, sans-serif;
    paint-order: stroke;
    stroke: #fff;
    stroke-width: 2px;
    stroke-linejoin: round;
}

.t-nm { font-size: 14px; }
.t-sb { font-size: 11px; }
.t-md { font-weight: 500; }
.t-or { fill: #d9730d; }
.t-pk { fill: #e8316f; }
.t-bl { fill: #1a73e8; }
.t-lb { fill: #4d8ff0; }
.t-rd { fill: #d93025; }
.t-dr { fill: #c5221f; }
.t-gy { fill: #5f6b76; }
.t-tl { fill: #129eaf; }
.t-road { font-size: 13px; fill: #70757a; letter-spacing: .2px; }
.t-h { font-size: 15px; font-weight: 500; fill: #fff; stroke: none; text-anchor: middle; }
.t-db { font-size: 8px; font-weight: 700; fill: #fff; stroke: none; text-anchor: middle; }
.t-mini { font-size: 9px; fill: #70757a; }

.t-goog {
    font-size: 19px;
    font-weight: 500;
    stroke: #fff;
    stroke-width: 1.500px;
}

.t-goog-lg {
    font-size: 23px;
}

.g-b { fill: #4285f4; }
.g-r { fill: #ea4335; }
.g-y { fill: #fbbc05; }
.g-g { fill: #34a853; }

.attr-bg { fill: rgba(255, 255, 255, .72); }

.t-attr {
    font-size: 10px;
    fill: #444;
    stroke: none;
}

.thumb-border { fill: #fff; filter: drop-shadow(0 1px 2px rgba(0, 0, 0, .35)); }
.thumb { fill: #4b4f4d; }
.thumb-a { fill: #343836; }
.thumb-b { fill: none; stroke: #8c908e; stroke-width: 1; stroke-dasharray: 3 2; }

/* fiche du lieu */
.place-card {
    position: absolute;
    left: 10px;
    top: 10px;
    width: 300px;
    height: 109px;
    background: #fff;
    box-shadow: 0 1px 3px rgba(0, 0, 0, .25);
    border-radius: 2px;
    display: flex;
    font-family: Roboto, sans-serif;
}

.place-info {
    width: 213px;
    padding: 11px 0 0 12px;
}

.place-name {
    font-size: 14px;
    line-height: 16px;
    font-weight: 500;
    color: #000;
}

.place-addr {
    margin-top: 6px;
    font-size: 12px;
    line-height: 16px;
    color: #5b5b5b;
}

.place-rating {
    display: flex;
    align-items: center;
    margin-top: 9px;
    height: 18px;
    font-size: 12px;
}

.rate {
    font-size: 14px;
    font-weight: 500;
    color: #e7711b;
}

.stars {
    margin-left: 3px;
    font-size: 14px;
    letter-spacing: -.8px;
    background: linear-gradient(90deg, #e7711b 88%, #ccc 88%);
    -webkit-background-clip: text;
    background-clip: text;
    color: transparent;
}

.reviews {
    margin-left: 5px;
    color: #3a84df;
}

.bigger {
    display: block;
    margin-top: 9px;
    font-size: 12px;
    line-height: 16px;
    color: #3a84df;
}

.place-dir {
    display: flex;
    flex-direction: column;
    align-items: center;
    width: 58px;
    padding-top: 12px;
    font-size: 12px;
    color: #3a84df;
}

.place-dir a {
    margin-top: 3px;
}

.dir-light { fill: #a9c8f5; }
.dir-dark { fill: #6a9fe9; }

.zoom-ctrl {
    position: absolute;
    left: 720px;
    top: 345px;
    width: 40px;
    height: 81px;
    background: #fff;
    border-radius: 2px;
    box-shadow: 0 1px 3px rgba(0, 0, 0, .2);
    display: flex;
    flex-direction: column;
}

.zoom-btn {
    flex: 1;
    display: flex;
    align-items: center;
    justify-content: center;
    padding: 0;
    border: none;
    background: none;
}

.zoom-ic { fill: #666; }

.zoom-sep {
    height: 1px;
    margin: 0 5px;
    background: #e6e6e6;
}

/* citymapper */
.citymapper {
    width: 300px;
    height: 451px;
    background: #38ab2f;
    font-family: Lato, sans-serif;
    color: #fff;
}

.cm-top {
    display: flex;
    align-items: center;
    height: 50px;
    padding: 0 13px;
    box-sizing: border-box;
}

.cm-arrow { fill: #267f2b; }

.cm-brand {
    margin-left: 5px;
    font-size: 14.500px;
    font-weight: 900;
}

.cm-app {
    margin-left: auto;
    width: 131px;
    height: 30px;
    line-height: 30px;
    text-align: center;
    font-size: 12.300px;
    font-weight: 900;
    background: #2c9a38;
    border-radius: 2px;
}

.cm-bg { fill: #e7e7e7; }
.cm-y { fill: #f9eec8; }
.cm-gr { fill: #cfe8c9; }
.cm-pk { fill: #f3d7d3; }
.cm-gy { fill: #d5d8dc; }
.cm-rd { fill: none; stroke: #fff; stroke-width: 1.200; }
.cm-rd2 { fill: none; stroke: #fff; stroke-width: 2; }
.cm-rd3 { fill: none; stroke: #fff; stroke-width: 1.600; }
.cm-pin { fill: #38ab2f; }
.cm-pin-shadow { fill: rgba(60, 60, 60, .35); }
.cm-pin-shadow2 { fill: rgba(30, 60, 90, .45); }

.cm-arr {
    font-size: 15px;
    font-weight: 700;
    letter-spacing: 1.800px;
    fill: #5f6368;
}

.cm-qt {
    font-size: 12px;
    font-weight: 500;
    letter-spacing: 2.200px;
    fill: #7b8aa3;
}

.cm-address {
    display: flex;
    align-items: center;
    gap: 9px;
    height: 69px;
    padding-left: 15px;
    box-sizing: border-box;
    background: #417299;
    font-size: 19.800px;
    line-height: 20px;
    font-weight: 900;
}

.cm-addr-text {
    margin: -10px 0 0 -1px;
}

.cm-form {
    display: flex;
    flex-direction: column;
    gap: 25px;
    padding: 15px;
}

.cm-input {
    height: 40px;
    padding: 0 11px;
    box-sizing: border-box;
    border: 1px solid #ddd;
    background: #fff;
    font-family: Lato, sans-serif;
    font-size: 14px;
}

.cm-input::placeholder {
    color: #b8d0e4;
}

.cm-go {
    position: relative;
    height: 40px;
    border: none;
    border-radius: 5px;
    background: #417299;
    color: #fff;
    font-family: Lato, sans-serif;
    font-size: 16px;
    font-weight: 900;
}

.cm-chevron {
    position: absolute;
    right: 15px;
    top: 13px;
    fill: none;
    stroke: #9db9cf;
    stroke-width: 2;
}

/* infos */
.infos {
    display: flex;
    margin-top: 137px;
}

.info {
    display: flex;
    flex: none;
    width: 421px;
}

.info-tel {
    width: 401px;
}

.info-ic {
    flex: none;
    margin: 6px 0 0 23px;
    width: 16px;
}

.info > div {
    margin-left: 39px;
}

.info-tel .info-ic {
    width: 20px;
    margin-left: 0;
}

.info-tel > div {
    margin-left: 39px;
}

.info-time {
    width: 300px;
}

.info-time .info-ic {
    width: 18px;
    margin: 8px 0 0 0;
}

.info-time > div {
    margin-left: 40px;
}

.dark-ic { fill: #333; }

.clock-hand {
    fill: none;
    stroke: #fff;
    stroke-width: 1.500;
}

.info h3 {
    margin: 0;
    font-family: Inter, sans-serif;
    font-weight: 500;
    font-size: 20px;
    line-height: 32px;
    letter-spacing: 3.400px;
    color: #2a2a2a;
}

.info p {
    margin: 13px 0 0;
    font-size: 14px;
    line-height: 20px;
    font-weight: 300;
    color: #555;
}

/* retour en haut */
.to-top {
    position: fixed;
    left: 1823px;
    top: 857px;
    width: 40px;
    height: 40px;
    display: flex;
    align-items: center;
    justify-content: center;
    background: rgba(70, 70, 70, .72);
    border-radius: 3px;
}

.to-top svg {
    fill: none;
    stroke: #fff;
    stroke-width: 1.800;
}

.cursor {
    position: fixed;
    left: 1769px;
    top: 611px;
    fill: #fff;
    stroke: #222;
    stroke-width: 1;
}
```
